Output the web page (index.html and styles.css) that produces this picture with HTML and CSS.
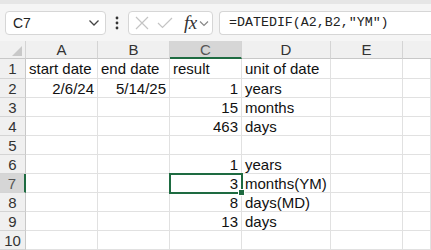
FILE: index.html
```html
<!DOCTYPE html>
<html lang="en">
<head>
    <meta charset="UTF-8">
    <title>DATEDIF</title>
    <link rel="stylesheet" href="styles.css">
</head>
<body>

    <div class="toolbar">
        <div class="namebox">
            <span>C7</span>
            <svg width="12" height="8" viewBox="0 0 12 8"><polyline points="1.5,1.5 6,6 10.5,1.5" fill="none" stroke="#444" stroke-width="1.3"/></svg>
        </div>
        <svg class="dots" width="4" height="14" viewBox="0 0 4 14">
            <circle cx="2" cy="2" r="1.4" fill="#333"/>
            <circle cx="2" cy="7" r="1.4" fill="#333"/>
            <circle cx="2" cy="12" r="1.4" fill="#333"/>
        </svg>
        <div class="fxbox">
            <svg width="14" height="14" viewBox="0 0 14 14"><path d="M1 1 L13 13 M13 1 L1 13" stroke="#c4c4c4" stroke-width="1.2"/></svg>
            <svg width="16" height="12" viewBox="0 0 16 12"><polyline points="1,6 5.5,10.5 15,1" fill="none" stroke="#c4c4c4" stroke-width="1.2"/></svg>
            <span class="fx">fx</span>
            <svg width="10" height="7" viewBox="0 0 10 7"><polyline points="1,1.5 5,5.5 9,1.5" fill="none" stroke="#888" stroke-width="1.2"/></svg>
        </div>
        <div class="formula">=DATEDIF(A2,B2,"YM")</div>
    </div>

    <div class="sheet">
        <div class="corner"><svg width="10" height="10" viewBox="0 0 10 10"><polygon points="10,0 10,10 0,10" fill="#c8c8c8"/></svg></div>
        <div class="colhead">A</div>
        <div class="colhead">B</div>
        <div class="colhead active">C</div>
        <div class="colhead">D</div>
        <div class="colhead">E</div>
        <div class="colhead last"></div>

        <div class="rowhead">1</div>
        <div class="cell">start date</div>
        <div class="cell">end date</div>
        <div class="cell">result</div>
        <div class="cell">unit of date</div>
        <div class="cell"></div>
        <div class="cell"></div>

        <div class="rowhead">2</div>
        <div class="cell num">2/6/24</div>
        <div class="cell num">5/14/25</div>
        <div class="cell num">1</div>
        <div class="cell">years</div>
        <div class="cell"></div>
        <div class="cell"></div>

        <div class="rowhead">3</div>
        <div class="cell"></div>
        <div class="cell"></div>
        <div class="cell num">15</div>
        <div class="cell">months</div>
        <div class="cell"></div>
        <div class="cell"></div>

        <div class="rowhead">4</div>
        <div class="cell"></div>
        <div class="cell"></div>
        <div class="cell num">463</div>
        <div class="cell">days</div>
        <div class="cell"></div>
        <div class="cell"></div>

        <div class="rowhead">5</div>
        <div class="cell"></div>
        <div class="cell"></div>
        <div class="cell"></div>
        <div class="cell"></div>
        <div class="cell"></div>
        <div class="cell"></div>

        <div class="rowhead">6</div>
        <div class="cell"></div>
        <div class="cell"></div>
        <div class="cell num">1</div>
        <div class="cell">years</div>
        <div class="cell"></div>
        <div class="cell"></div>

        <div class="rowhead active">7</div>
        <div class="cell"></div>
        <div class="cell"></div>
        <div class="cell num selected">3<span class="handle"></span></div>
        <div class="cell">months(YM)</div>
        <div class="cell"></div>
        <div class="cell"></div>

        <div class="rowhead">8</div>
        <div class="cell"></div>
        <div class="cell"></div>
        <div class="cell num">8</div>
        <div class="cell">days(MD)</div>
        <div class="cell"></div>
        <div class="cell"></div>

        <div class="rowhead">9</div>
        <div class="cell"></div>
        <div class="cell"></div>
        <div class="cell num">13</div>
        <div class="cell">days</div>
        <div class="cell"></div>
        <div class="cell"></div>

        <div class="rowhead">10</div>
        <div class="cell"></div>
        <div class="cell"></div>
        <div class="cell"></div>
        <div class="cell"></div>
        <div class="cell"></div>
        <div class="cell"></div>
    </div>

</body>
</html>
```

FILE: styles.css
```css
body {
    margin: 0;
    font-family: "Liberation Sans", Arial, sans-serif;
    background: #fff;
    overflow: hidden;
}

.toolbar {
    height: 41px;
    box-sizing: border-box;
    background: #f5f5f5;
    border-top: 4px solid #e6e6e6;
    display: flex;
    align-items: center;
    padding: 1px 0 0 5px;
}

.namebox {
    width: 101px;
    height: 24px;
    box-sizing: border-box;
    background: #fff;
    border: 1px solid #d6d6d6;
    border-radius: 4px;
    display: flex;
    align-items: center;
    justify-content: space-between;
    padding: 0 5px 0 7px;
    font-size: 14px;
    color: #222;
}

.dots {
    margin: 0 9px 0 9px;
}

.fxbox {
    width: 85px;
    height: 24px;
    box-sizing: border-box;
    background: #fff;
    border: 1px solid #d6d6d6;
    border-radius: 4px;
    display: flex;
    align-items: center;
    gap: 8px;
    padding: 0 3px 0 6px;
}

.fx {
    font-family: "Liberation Serif", serif;
    font-style: italic;
    font-size: 19px;
    color: #333;
    margin-left: 3px;
    margin-right: -6px;
    letter-spacing: -0.5px;
}

.formula {
    flex: 1;
    height: 24px;
    box-sizing: border-box;
    margin-left: 6px;
    background: #fff;
    border: 1px solid #d6d6d6;
    border-right: none;
    border-radius: 4px 0 0 4px;
    padding-left: 9px;
    font-family: "Liberation Mono", monospace;
    font-size: 13.3px;
    line-height: 22px;
    color: #222;
}

.sheet {
    display: grid;
    grid-template-columns: 26px 72px 72px 72px 89px 72px 1fr;
    grid-template-rows: 18px 20px repeat(9, 19px);
    font-size: 15px;
}

.corner,
.colhead,
.rowhead {
    background: #f0f0f0;
    color: #333;
    box-sizing: border-box;
}

.corner {
    border-right: 1px solid #d4d4d4;
    border-bottom: 1px solid #c8c8c8;
    display: flex;
    align-items: flex-end;
    justify-content: flex-end;
    padding: 0 3px 2px 0;
}

.colhead {
    border-right: 1px solid #d4d4d4;
    border-bottom: 1px solid #c8c8c8;
    text-align: center;
    line-height: 18px;
}

.colhead.last {
    border-right: none;
}

.colhead.active {
    background: #d6d6d6;
    border-bottom: 2px solid #1e6b41;
    color: #555;
    line-height: 17px;
}

.rowhead {
    border-right: 1px solid #c8c8c8;
    border-bottom: 1px solid #d4d4d4;
    text-align: center;
    line-height: 20px;
}

.rowhead.active {
    background: #d6d6d6;
    border-right: 2px solid #1e6b41;
    color: #555;
}

.cell {
    box-sizing: border-box;
    border-right: 1px solid #e1e1e1;
    border-bottom: 1px solid #e1e1e1;
    padding: 0 3px;
    line-height: 20px;
    color: #111;
    white-space: nowrap;
    position: relative;
}

.cell.num {
    text-align: right;
}

.cell.selected {
    outline: 2px solid #1e6b41;
    outline-offset: -1px;
    z-index: 1;
}

.handle {
    position: absolute;
    right: -4px;
    bottom: -4px;
    width: 5px;
    height: 5px;
    background: #1e6b41;
    border: 1px solid #fff;
}
```
